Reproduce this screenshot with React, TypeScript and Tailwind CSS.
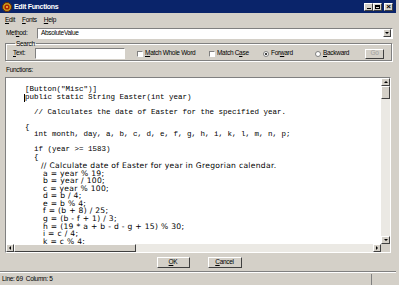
import React from "react";

const mono = { fontFamily: '"Liberation Mono", "DejaVu Sans Mono", monospace' };
const sans = { fontFamily: '"DejaVu Sans", Verdana, sans-serif' };

const topLines = [
  '[Button("Misc")]',
  "public static String Easter(int year)",
  "",
  "  // Calculates the date of Easter for the specified year.",
  "",
  "{",
  "  int month, day, a, b, c, d, e, f, g, h, i, k, l, m, n, p;",
  "",
  "  if (year >= 1583)",
  "  {",
];

const lowerLines = [
  "a = year % 19;",
  "b = year / 100;",
  "c = year % 100;",
  "d = b / 4;",
  "e = b % 4;",
  "f = (b + 8) / 25;",
  "g = (b - f + 1) / 3;",
  "h = (19 * a + b - d - g + 15) % 30;",
  "i = c / 4;",
  "k = c % 4;",
];

function Raised({ className = "", children }: { className?: string; children?: React.ReactNode }) {
  return (
    <div
      className={
        "flex items-center justify-center shrink-0 bg-[#d4d0c8] border border-t-white border-l-white border-r-[#404040] border-b-[#404040] " +
        className
      }
    >
      {children}
    </div>
  );
}

function Check({ label, u, rest }: { label: string; u: string; rest: string }) {
  return (
    <div className="flex items-center gap-[2px] whitespace-nowrap">
      <span className="w-[6px] h-[6px] shrink-0 bg-white border border-t-[#808080] border-l-[#808080] border-r-white border-b-white" />
      <span>
        {label}
        <span className="underline">{u}</span>
        {rest}
      </span>
    </div>
  );
}

function Radio({ pre, u, rest, on }: { pre: string; u: string; rest: string; on?: boolean }) {
  return (
    <div className="flex items-center gap-[2px] whitespace-nowrap">
      <span className="w-[6px] h-[6px] shrink-0 rounded-full bg-white border border-[#808080] flex items-center justify-center">
        {on && <span className="w-[2px] h-[2px] rounded-full bg-black" />}
      </span>
      <span>
        {pre}
        <span className="underline">{u}</span>
        {rest}
      </span>
    </div>
  );
}

export default function App() {
  return (
    <div
      className="w-[399px] h-[285px] overflow-hidden bg-[#d4d0c8] text-[6.5px] tracking-[-0.3px] leading-none text-black flex flex-col pr-[3px]"
      style={{ fontFamily: '"Liberation Sans", Arial, sans-serif' }}
    >
      {/* title bar */}
      <div className="h-[13px] shrink-0 bg-[#0a246a] flex items-center pl-[2px] pr-[3px]">
        <svg width="10" height="10" viewBox="0 0 10 10" className="shrink-0">
          <circle cx="5" cy="5" r="4.5" fill="#c8a020" stroke="#6a2a00" />
          <circle cx="5" cy="5" r="2.6" fill="#b02000" />
          <circle cx="5" cy="5" r="1" fill="#f0d040" />
        </svg>
        <span className="ml-[2px] text-white font-bold text-[7px]">Edit Functions</span>
        <div className="ml-auto flex items-center tracking-normal">
          <Raised className="w-[9px] h-[8px]">
            <span className="w-[4px] h-[1px] bg-black mt-[4px]" />
          </Raised>
          <Raised className="w-[9px] h-[8px]">
            <span className="w-[5px] h-[4px] border border-black border-t-2" />
          </Raised>
          <Raised className="w-[9px] h-[8px] ml-[2px] text-[8px] font-bold">×</Raised>
        </div>
      </div>

      {/* menu */}
      <div className="h-[14px] shrink-0 flex items-center gap-[7px] pl-[5px]">
        <span><span className="underline">E</span>dit</span>
        <span><span className="underline">F</span>onts</span>
        <span><span className="underline">H</span>elp</span>
      </div>

      {/* method */}
      <div className="h-[12px] shrink-0 flex items-center pl-[6px] pr-[3px]">
        <span className="w-[31px]">Met<span className="underline">h</span>od:</span>
        <div className="flex-1 h-[11px] bg-white border border-t-[#808080] border-l-[#808080] border-r-white border-b-white flex items-center pl-[3px]">
          <span>AbsoluteValue</span>
          <Raised className="ml-auto w-[8px] h-[8px] mr-[1px]">
            <span className="w-0 h-0 border-l-[2px] border-r-[2px] border-t-[2px] border-l-transparent border-r-transparent border-t-black" />
          </Raised>
        </div>
      </div>

      {/* search group */}
      <fieldset className="shrink-0 mx-[5px] mt-[1px] h-[21px] border border-[#808080] shadow-[inset_1px_1px_0_#fff,1px_1px_0_#fff] px-[7px] flex items-center">
        <legend className="px-[1px] ml-[2px] leading-[7px]">Search</legend>
        <div className="flex items-center w-full mt-[1px]">
          <span className="w-[22px] shrink-0"><span className="underline">T</span>ext:</span>
          <div className="w-[90px] shrink-0 h-[11px] bg-white border border-t-[#808080] border-l-[#808080] border-r-white border-b-white" />
          <div className="ml-[12px] w-[72px] shrink-0">
            <Check label="" u="M" rest="atch Whole Word" />
          </div>
          <div className="w-[54px] shrink-0">
            <Check label="Match C" u="a" rest="se" />
          </div>
          <div className="w-[52px] shrink-0">
            <Radio pre="For" u="w" rest="ard" on />
          </div>
          <div className="w-[50px] shrink-0">
            <Radio pre="" u="B" rest="ackward" />
          </div>
          <Raised className="w-[19px] h-[10px] text-[#a0a0a0]">Go</Raised>
        </div>
      </fieldset>

      {/* functions label */}
      <div className="shrink-0 pl-[6px] pt-[6px] h-[16px]">Functions:</div>

      {/* code box */}
      <div className="shrink-0 mx-[5px] h-[176px] border border-t-[#808080] border-l-[#808080] border-r-white border-b-white bg-white flex flex-col tracking-normal">
        <div className="flex flex-1 min-h-0">
          <div className="flex-1 overflow-hidden pt-[8px] pl-[19px]">
            <div className="text-[7.5px] leading-[7.5px] whitespace-pre" style={mono}>
              {topLines.map((l, i) => (
                <div key={i} className="h-[7.5px]">
                  {i === 1 ? (
                    <>
                      <span className="inline-block w-[1px] h-[8px] bg-black align-top -ml-[1px]" />
                      {l}
                    </>
                  ) : (
                    l
                  )}
                </div>
              ))}
            </div>
            <div className="pl-[16px] whitespace-pre pt-[1px] text-[7.6px] leading-[7.5px] tracking-[0.3px]" style={sans}>
              <div className="h-[7.5px]">
                // Calculate date of Easter for year in Gregorian calendar.
              </div>
              <div className="pl-[2px]">
                {lowerLines.map((l, i) => (
                  <div key={i} className="h-[7.6px]">
                    {l}
                  </div>
                ))}
              </div>
            </div>
          </div>
          {/* vertical scrollbar */}
          <div className="w-[9px] flex flex-col bg-[#ebe9e4]">
            <Raised className="h-[8px] w-[9px]">
              <span className="w-0 h-0 border-l-[2px] border-r-[2px] border-b-[2px] border-l-transparent border-r-transparent border-b-black" />
            </Raised>
            <Raised className="h-[13px] w-[9px]" />
            <div className="flex-1" />
            <Raised className="h-[8px] w-[9px]">
              <span className="w-0 h-0 border-l-[2px] border-r-[2px] border-t-[2px] border-l-transparent border-r-transparent border-t-black" />
            </Raised>
          </div>
        </div>
        {/* horizontal scrollbar */}
        <div className="h-[8px] flex bg-[#ebe9e4]">
          <Raised className="w-[8px] h-[8px]">
            <span className="w-0 h-0 border-t-[2px] border-b-[2px] border-r-[2px] border-t-transparent border-b-transparent border-r-black" />
          </Raised>
          <Raised className="w-[122px] h-[8px]" />
          <div className="flex-1" />
          <Raised className="w-[8px] h-[8px]">
            <span className="w-0 h-0 border-t-[2px] border-b-[2px] border-l-[2px] border-t-transparent border-b-transparent border-l-black" />
          </Raised>
          <div className="w-[9px] bg-[#d4d0c8]" />
        </div>
      </div>

      {/* buttons */}
      <div className="shrink-0 flex justify-center gap-[18px] pt-[4px] h-[18px] pl-[2px]">
        <Raised className="w-[33px] h-[11px]">
          <span><span className="underline">O</span>K</span>
        </Raised>
        <Raised className="w-[34px] h-[11px]">
          <span><span className="underline">C</span>ancel</span>
        </Raised>
      </div>

      {/* status bar */}
      <div className="flex-1 flex items-stretch border-t border-t-[#808080] shadow-[inset_0_1px_0_#fff] pt-[2px]">
        <div className="w-[372px] flex items-center pl-[2px] border-r border-r-[#808080]">
          Line: 69&nbsp;&nbsp;Column: 5
        </div>
        <div className="flex-1" />
      </div>
    </div>
  );
}
